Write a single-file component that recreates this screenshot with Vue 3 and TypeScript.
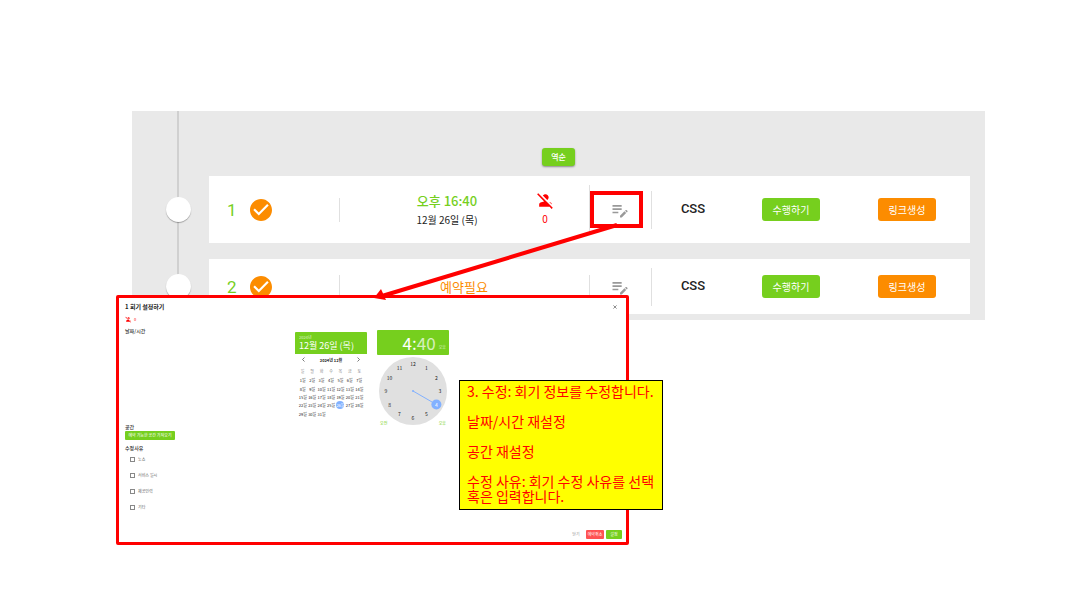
<script setup lang="ts">
interface Session {
  no: number
  time?: string
  date?: string
  absent?: number
}

const sessions: Session[] = [
  { no: 1, time: '오후 16:40', date: '12월 26일 (목)', absent: 0 },
  { no: 2 },
]

const weekdays = ['일', '월', '화', '수', '목', '금', '토']
const weeks: number[][] = Array.from({ length: 5 }, (_, w) =>
  Array.from({ length: 7 }, (_, d) => w * 7 + d + 1).filter((d) => d <= 31),
)
const selectedDay = 26

const selectedHour = 4
const hours = Array.from({ length: 12 }, (_, i) => {
  const angle = ((i + 1) * Math.PI) / 6
  return { value: i + 1, x: 34 + 27 * Math.sin(angle), y: 34 - 27 * Math.cos(angle) }
})
const hand = hours[selectedHour - 1]

const reasons = ['노쇼', '서비스 일시', '제공인력', '기타']

const personOff =
  'M8.65 5.82C9.36 4.72 10.6 4 12 4c2.21 0 4 1.79 4 4 0 1.4-.72 2.64-1.82 3.35L8.65 5.82zM20 17.17c-.02-1.1-.63-2.11-1.61-2.62-.54-.28-1.13-.54-1.77-.76L20 17.17zm1.19 4.02L2.81 2.81 1.39 4.22l8.89 8.89c-1.81.23-3.39.79-4.67 1.45C4.61 15.07 4 16.1 4 17.22V20h13.17l2.61 2.61 1.41-1.42z'
const editNote =
  'M3 10h11v2H3v-2zm0-2h11V6H3v2zm0 8h7v-2H3v2zm15.01-3.13.71-.71c.39-.39 1.02-.39 1.41 0l.71.71c.39.39.39 1.02 0 1.41l-.71.71-2.12-2.12zm-.71.71-5.3 5.3V21h2.12l5.3-5.3-2.12-2.12z'
const checkCircle =
  'M12 2C6.48 2 2 6.48 2 12s4.48 10 10 10 10-4.48 10-10S17.52 2 12 2zm-2 15l-5-5 1.41-1.41L10 14.17l7.59-7.59L19 8l-9 9z'
</script>

<template>
  <main class="page">
    <section class="board">
      <div class="toolbar">
        <button type="button" class="btn btn-sort">역순</button>
      </div>
      <ol class="timeline">
        <li v-for="s in sessions" :key="s.no" class="item">
          <span class="dot"></span>
          <article class="card" :class="{ tall: s.time }">
            <div class="cell cell-no">
              <span class="no">{{ s.no }}</span>
              <svg class="check" viewBox="2 2 20 20"><path :d="checkCircle" /></svg>
            </div>
            <div class="cell cell-time" :class="{ wide: !s.time }">
              <template v-if="s.time">
                <strong class="time">{{ s.time }}</strong>
                <span class="date">{{ s.date }}</span>
              </template>
              <span v-else class="needed">예약필요</span>
            </div>
            <div class="cell cell-absent">
              <template v-if="s.absent !== undefined">
                <svg class="person" viewBox="0 0 24 24"><path :d="personOff" /></svg>
                <span class="count">{{ s.absent }}</span>
              </template>
            </div>
            <div class="cell cell-edit">
              <button type="button" class="edit" aria-label="수정">
                <svg viewBox="0 0 24 24"><path :d="editNote" /></svg>
              </button>
            </div>
            <div class="cell cell-type">CSS</div>
            <div class="cell"><button type="button" class="btn btn-run">수행하기</button></div>
            <div class="cell cell-link"><button type="button" class="btn btn-link">링크생성</button></div>
          </article>
        </li>
      </ol>
    </section>

    <section class="dialog" role="dialog" aria-labelledby="dialog-title">
      <header class="dialog-head">
        <h2 id="dialog-title">1 회기 설정하기</h2>
        <button type="button" class="close" aria-label="닫기">
          <svg viewBox="0 0 10 10"><path d="M1 1l8 8M9 1l-8 8" /></svg>
        </button>
      </header>
      <p class="absence">
        <svg viewBox="0 0 24 24"><path :d="personOff" /></svg><span>0</span>
      </p>
      <h3>날짜/시간</h3>
      <div class="pickers">
        <div class="calendar">
          <div class="cal-head">
            <span class="year">2024년</span>
            <span class="picked">12월 26일 (목)</span>
          </div>
          <div class="cal-nav">
            <button type="button" aria-label="이전 달">
              <svg viewBox="0 0 10 10"><path d="M7 1L3 5l4 4" /></svg>
            </button>
            <strong>2024년 12월</strong>
            <button type="button" aria-label="다음 달">
              <svg viewBox="0 0 10 10"><path d="M3 1l4 4-4 4" /></svg>
            </button>
          </div>
          <table class="days">
            <thead>
              <tr><th v-for="d in weekdays" :key="d">{{ d }}</th></tr>
            </thead>
            <tbody>
              <tr v-for="(week, i) in weeks" :key="i">
                <td v-for="d in week" :key="d">
                  <button type="button" :class="{ on: d === selectedDay }">{{ d }}일</button>
                </td>
              </tr>
            </tbody>
          </table>
        </div>
        <div class="clock">
          <div class="clock-head">
            <span class="digits">4:<span class="dim">40</span></span>
            <span class="half">오후</span>
          </div>
          <svg class="face" viewBox="0 0 68 68">
            <circle class="plate" cx="34" cy="34" r="34" />
            <line class="hand" x1="34" y1="34" :x2="hand.x" :y2="hand.y" />
            <circle class="knob" cx="34" cy="34" r="1" />
            <circle class="knob" :cx="hand.x" :cy="hand.y" r="5" />
            <text
              v-for="h in hours"
              :key="h.value"
              :x="h.x"
              :y="h.y + 2"
              :class="{ on: h.value === selectedHour }"
            >{{ h.value }}</text>
          </svg>
          <div class="ampm">
            <button type="button">오전</button>
            <button type="button">오후</button>
          </div>
        </div>
      </div>
      <h3>공간</h3>
      <button type="button" class="space-btn">예약 가능한 공간 가져오기</button>
      <h3 class="reason-title">수정사유</h3>
      <div class="reasons">
        <label v-for="r in reasons" :key="r"><input type="checkbox" />{{ r }}</label>
      </div>
      <footer class="actions">
        <button type="button" class="plain">닫기</button>
        <button type="button" class="cancel">예약취소</button>
        <button type="button" class="save">설정</button>
      </footer>
    </section>

    <div class="highlight"></div>
    <svg class="arrow" viewBox="0 0 246 78">
      <path class="shaft" d="M243 3L8 74" />
      <path class="tip" d="M0 76L7 67L12 78Z" />
    </svg>

    <aside class="note">
      <p>3. 수정: 회기 정보를 수정합니다.</p>
      <p>날짜/시간 재설정</p>
      <p>공간 재설정</p>
      <p>수정 사유: 회기 수정 사유를 선택 혹은 입력합니다.</p>
    </aside>
  </main>
</template>

<style>
body {
  margin: 0;
  background: #fff;
}
</style>

<style scoped>
.page {
  position: relative;
  box-sizing: border-box;
  min-height: 100vh;
  padding: 111px 95px 0 132px;
  font-family: "Noto Sans CJK KR", sans-serif;
  color: #222;
}
button {
  margin: 0;
  padding: 0;
  border: 0;
  background: none;
  font: inherit;
  color: inherit;
}
svg {
  display: block;
}
h2,
h3,
p {
  margin: 0;
}

/* timeline board */
.board {
  position: relative;
  padding-bottom: 6px;
  background: #e9e9e9;
}
.board::before {
  content: "";
  position: absolute;
  top: 0;
  bottom: 0;
  left: 45px;
  width: 2px;
  background: #d0d0d0;
}
.toolbar {
  display: flex;
  justify-content: center;
  padding: 37px 0 10px;
}
.btn {
  border-radius: 3px;
  color: #fff;
}
.btn-sort {
  width: 33px;
  height: 18px;
  background: #76cf1e;
  font-size: 8px;
  font-weight: 500;
  line-height: 18px;
  box-shadow: 0 1px 2px rgba(0, 0, 0, 0.4);
}
.timeline {
  display: grid;
  gap: 16px;
  margin: 0;
  padding: 0 15px 0 0;
  list-style: none;
}
.item {
  position: relative;
  display: grid;
  grid-template-columns: 77px minmax(0, 1fr);
  align-items: center;
}
.dot {
  width: 25px;
  height: 25px;
  margin-left: 34px;
  border-radius: 50%;
  background: #fff;
  box-shadow: 0 1px 1px rgba(0, 0, 0, 0.3);
}
.card {
  display: grid;
  grid-template-columns: 130fr 171fr 79fr 62fr 84fr 112fr 123fr;
  min-height: 55px;
  background: #fff;
}
.card.tall {
  min-height: 67px;
}
.cell {
  position: relative;
  display: flex;
  min-width: 0;
  align-items: center;
  justify-content: center;
}
.cell-no {
  justify-content: flex-start;
  gap: 13px;
  padding-left: 18px;
}
.no {
  width: 10px;
  font-family: Roboto, sans-serif;
  font-size: 17px;
  line-height: 20px;
  color: #76cf1e;
}
.check {
  width: 22px;
  height: 22px;
  fill: #fc8c00;
}
.cell-no::after,
.cell-absent::after,
.cell-edit::after {
  content: "";
  position: absolute;
  right: -1px;
  width: 1px;
  height: 24px;
  background: #e0e0e0;
}
.cell-edit::after {
  height: 38px;
}
.tall .cell-absent::after {
  height: 50px;
}
.cell-time {
  flex-direction: column;
  padding-left: 45px;
}
.cell-time.wide {
  padding-left: 79px;
}
.time {
  font-size: 13px;
  font-weight: 500;
  line-height: 19px;
  color: #76cf1e;
}
.date {
  font-size: 10px;
  line-height: 19px;
  white-space: nowrap;
}
.needed {
  font-size: 13px;
  line-height: 18px;
  color: #fc8c00;
}
.cell-absent {
  flex-direction: column;
  padding-right: 9px;
  color: #f00;
}
.person {
  width: 19px;
  height: 19px;
  fill: #f00;
}
.count {
  font-size: 10px;
  line-height: 18px;
}
.edit svg {
  width: 20px;
  height: 20px;
  fill: #999;
}
.cell-type {
  padding-bottom: 3px;
  font-family: Roboto, sans-serif;
  font-size: 13px;
  font-weight: 500;
}
.btn-run,
.btn-link {
  width: 58px;
  height: 23px;
  font-size: 10px;
  line-height: 24px;
  background: #76cf1e;
}
.btn-link {
  background: #fc8c00;
}
.cell-link {
  padding-right: 3px;
}

/* settings dialog laid over the board */
.dialog {
  position: absolute;
  top: 295px;
  left: 116px;
  box-sizing: border-box;
  width: 513px;
  padding: 5px 4px 3px 6px;
  border: 3px solid #f00;
  border-radius: 2px;
  background: #fff;
  font-size: 4px;
}
.dialog-head {
  display: flex;
  align-items: center;
  justify-content: space-between;
  padding-right: 5px;
}
h2 {
  font-size: 6px;
  font-weight: 700;
  line-height: 8px;
}
.close svg {
  width: 4px;
  height: 4px;
  fill: none;
  stroke: #444;
  stroke-width: 1.5;
}
.absence {
  display: flex;
  align-items: center;
  gap: 2px;
  height: 16px;
  color: #f00;
}
.absence svg {
  width: 7px;
  height: 7px;
  fill: #f00;
}
h3 {
  font-size: 5px;
  font-weight: 500;
  line-height: 8px;
  color: #333;
}
.pickers {
  display: flex;
  align-items: flex-start;
  justify-content: center;
  gap: 10px;
  height: 93px;
  margin-top: -5px;
  padding-right: 3px;
}
.calendar {
  width: 72px;
  padding-top: 2px;
}
.cal-head {
  display: flex;
  flex-direction: column;
  height: 22px;
  box-sizing: border-box;
  padding: 3px 4px 0;
  border-radius: 1px 1px 0 0;
  background: #76cf1e;
  color: #fff;
}
.year {
  line-height: 5px;
  opacity: 0.7;
}
.picked {
  font-size: 9px;
  line-height: 12px;
  white-space: nowrap;
}
.cal-nav {
  display: flex;
  align-items: center;
  justify-content: space-between;
  height: 11px;
  padding: 0 6px;
  font-size: 4px;
}
.cal-nav svg {
  width: 5px;
  height: 5px;
  fill: none;
  stroke: #444;
  stroke-width: 1.4;
}
.days {
  width: 66px;
  height: 53px;
  margin: 0 auto;
  border-collapse: collapse;
  table-layout: fixed;
  font-size: 4px;
  text-align: center;
}
.days th {
  height: 11px;
  padding: 0;
  font-weight: 400;
  line-height: 8px;
  color: #888;
}
.days td {
  padding: 0;
  line-height: 8px;
}
.days button {
  display: block;
  width: 8px;
  height: 8px;
  margin: 0 auto;
  border-radius: 50%;
  line-height: 8px;
  white-space: nowrap;
}
.days .on {
  background: #82b1ff;
  color: #fff;
}
.clock {
  width: 72px;
}
.clock-head {
  display: flex;
  align-items: center;
  justify-content: flex-end;
  gap: 3px;
  height: 25px;
  padding-right: 3px;
  border-radius: 1px;
  background: #76cf1e;
  color: #fff;
}
.digits {
  font-size: 17px;
  line-height: 25px;
}
.dim {
  opacity: 0.7;
}
.half {
  padding-top: 8px;
  opacity: 0.7;
}
.face {
  width: 68px;
  height: 68px;
  margin: 2px auto 0;
}
.plate {
  fill: #e0e0e0;
}
.hand {
  stroke: #82b1ff;
  stroke-width: 1;
}
.knob {
  fill: #82b1ff;
}
.face text {
  font-size: 5px;
  text-anchor: middle;
  fill: #222;
}
.face text.on {
  fill: #fff;
}
.ampm {
  display: flex;
  justify-content: space-between;
  margin-top: -5px;
  padding: 0 3px;
  line-height: 6px;
  color: #76cf1e;
}
.space-btn {
  display: block;
  width: 50px;
  height: 9px;
  border-radius: 1px;
  background: #76cf1e;
  color: #fff;
  line-height: 9px;
  white-space: nowrap;
}
.reason-title {
  margin-top: 4px;
}
.reasons {
  display: grid;
  gap: 8px;
  padding: 3px 5px;
}
.reasons label {
  display: flex;
  align-items: center;
  gap: 3px;
  height: 8px;
  color: #666;
}
.reasons input {
  appearance: none;
  box-sizing: border-box;
  width: 5px;
  height: 5px;
  margin: 0;
  border: 1px solid #888;
}
.actions {
  display: flex;
  justify-content: flex-end;
  gap: 2px;
  margin-top: 16px;
  line-height: 9px;
}
.actions button {
  height: 9px;
  border-radius: 1px;
  color: #fff;
}
.actions .plain {
  width: 16px;
  color: #999;
}
.actions .cancel {
  width: 18px;
  background: #ff5252;
}
.actions .save {
  width: 16px;
  background: #76cf1e;
}

/* callouts */
.highlight {
  position: absolute;
  top: 191px;
  left: 590px;
  box-sizing: border-box;
  width: 53px;
  height: 37px;
  border: 4px solid #f00;
}
.arrow {
  position: absolute;
  top: 222px;
  left: 374px;
  width: 246px;
  height: 78px;
}
.shaft {
  fill: none;
  stroke: #f00;
  stroke-width: 4;
}
.tip {
  fill: #f00;
}
.note {
  position: absolute;
  top: 380px;
  left: 459px;
  box-sizing: border-box;
  width: 204px;
  padding: 3px 6px 5px 7px;
  border: 1px solid #000;
  background: #ff0;
  color: #f00;
  font-size: 14px;
  line-height: 15px;
}
.note p + p {
  margin-top: 15px;
}
</style>
